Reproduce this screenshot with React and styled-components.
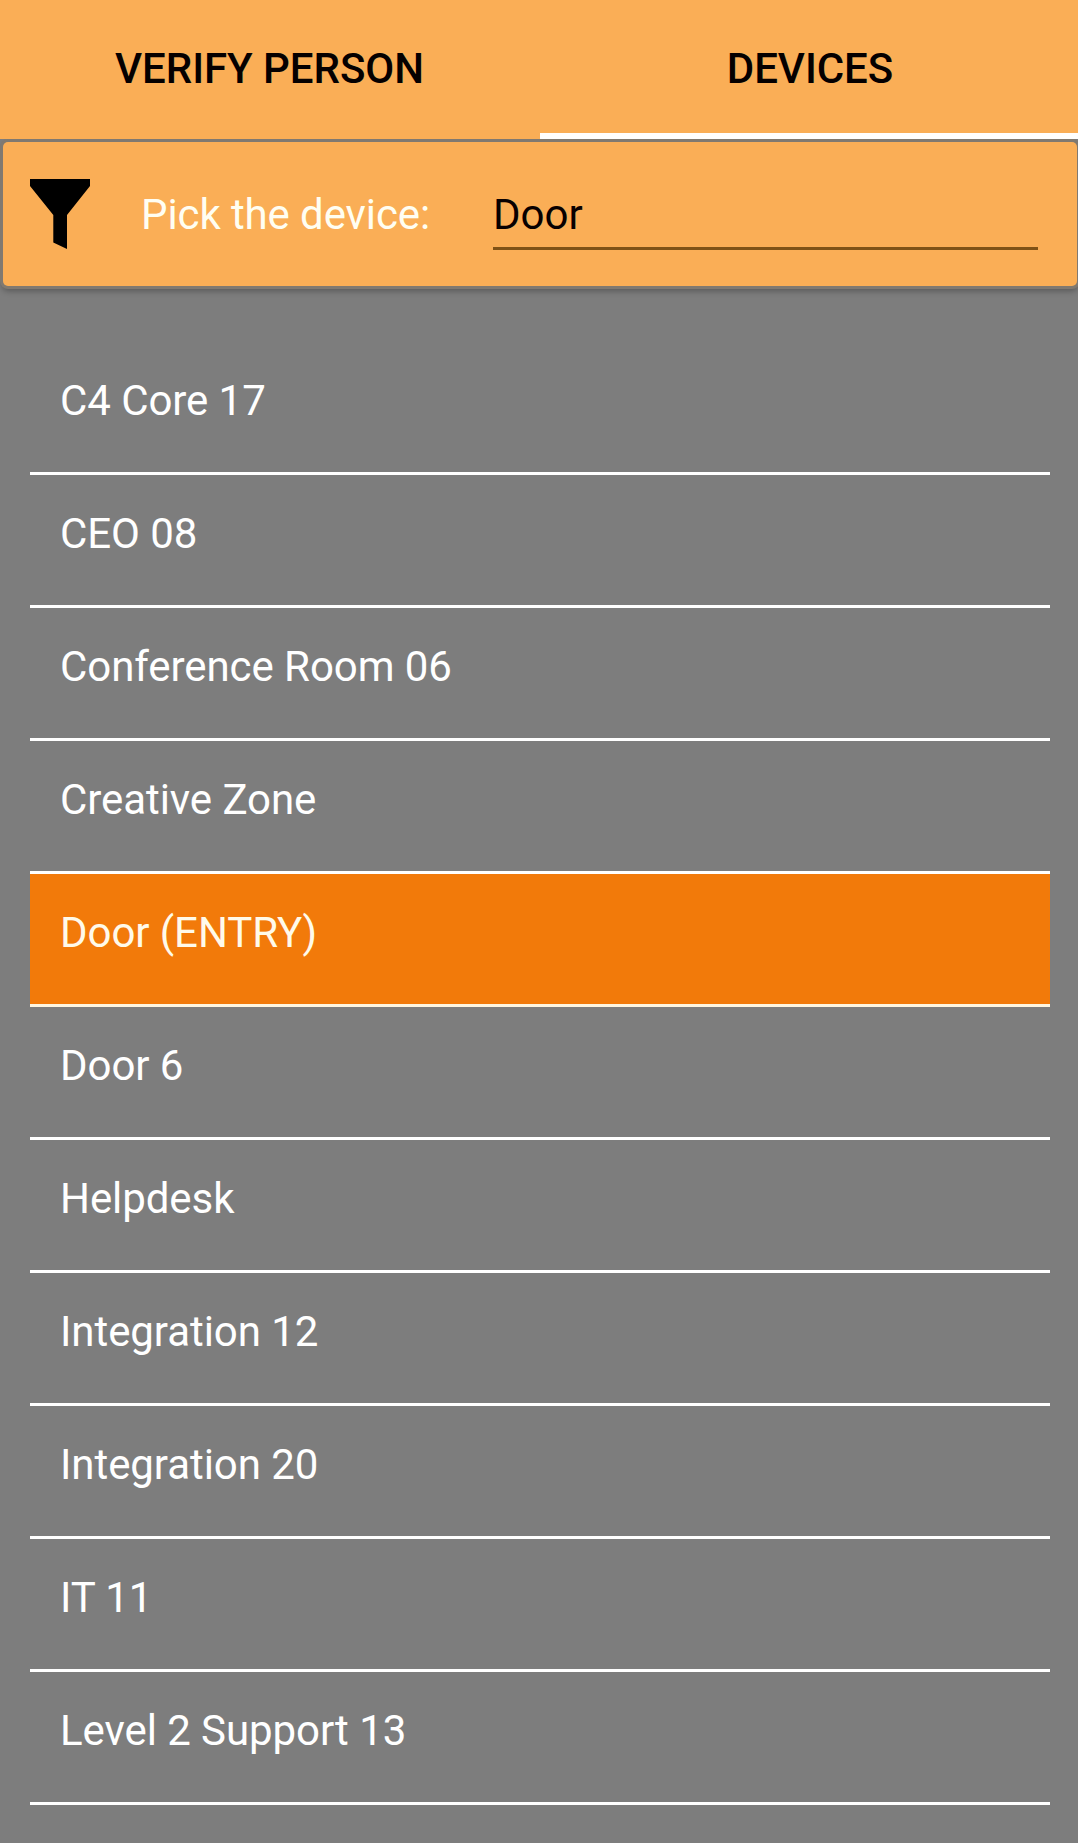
import React, { useState } from 'react';
import styled, { createGlobalStyle } from 'styled-components';

const GlobalStyle = createGlobalStyle`
  * { box-sizing: border-box; }
  body {
    margin: 0;
    background: #7d7d7d;
    font-family: Roboto, "Liberation Sans", sans-serif;
  }
`;

const Screen = styled.div`
  display: flex;
  flex-direction: column;
  width: 1078px;
  height: 1843px;
  overflow: hidden;
  background: #7d7d7d;
`;

const Tabs = styled.nav`
  display: grid;
  grid-template-columns: 540px 538px;
  height: 139px;
  flex: none;
  background: #faae56;
`;

const Tab = styled.button`
  appearance: none;
  margin: 0;
  padding: 4px ${(p) => (p.$active ? '0 0 2px' : '1px 0 0')};
  border: 0;
  border-bottom: 6px solid ${(p) => (p.$active ? '#ffffff' : 'transparent')};
  background: none;
  color: #050000;
  font: 500 42px/49px Roboto, "Liberation Sans", sans-serif;
  letter-spacing: -0.05px;
  text-transform: uppercase;
`;

const FilterCard = styled.section`
  display: flex;
  align-items: flex-start;
  flex: none;
  height: 144px;
  margin: 3px 1px 0 3px;
  padding: 0 39px 0 27px;
  border-radius: 5px;
  background: #faae56;
  box-shadow: 0 0 0 3px #807970, 0 4px 6px 1px rgba(0, 0, 0, 0.3);
  clip-path: inset(-3px -3px -20px -3px);
`;

const FunnelIcon = styled.svg`
  flex: none;
  width: 60px;
  height: 70px;
  margin: 37px 51px 0 0;
  fill: #000000;
`;

const FilterLabel = styled.label`
  flex: none;
  width: 352px;
  margin-top: 48px;
  color: #fffef2;
  font-size: 42px;
  line-height: 49px;
  letter-spacing: -0.1px;
`;

const FilterInput = styled.input`
  flex: 1;
  min-width: 0;
  height: 60px;
  margin: 48px 0 0;
  padding: 0 0 8px;
  border: 0;
  border-bottom: 3px solid #7f5216;
  border-radius: 0;
  outline: none;
  background: transparent;
  color: #080000;
  font: 400 42px/49px Roboto, "Liberation Sans", sans-serif;
`;

const DeviceList = styled.ul`
  margin: 56px 28px 0 30px;
  padding: 0;
  list-style: none;
`;

const DeviceRow = styled.li`
  height: 133px;
  padding: 34px 30px 0;
  border-bottom: 3px solid ${(p) => (p.$selected ? '#fff6e0' : '#ffffff')};
  background: ${(p) => (p.$selected ? '#f27a0a' : 'transparent')};
  color: ${(p) => (p.$selected ? '#fffaea' : '#ffffff')};
  font-size: 42px;
  line-height: 49px;
  letter-spacing: -0.07px;
`;

const devices = [
  'C4 Core 17',
  'CEO 08',
  'Conference Room 06',
  'Creative Zone',
  'Door (ENTRY)',
  'Door 6',
  'Helpdesk',
  'Integration 12',
  'Integration 20',
  'IT 11',
  'Level 2 Support 13',
];

export default function App() {
  const [query, setQuery] = useState('Door');
  const [selected, setSelected] = useState('Door (ENTRY)');

  return (
    <>
      <GlobalStyle />
      <Screen>
        <Tabs>
          <Tab>Verify person</Tab>
          <Tab $active>Devices</Tab>
        </Tabs>
        <FilterCard>
          <FunnelIcon viewBox="0 0 60 70" aria-hidden="true">
            <path d="M0 0H60V7L37 36V70L23.300 63.500V36L0 7Z" />
          </FunnelIcon>
          <FilterLabel htmlFor="device">Pick the device:</FilterLabel>
          <FilterInput
            id="device"
            value={query}
            onChange={(e) => setQuery(e.target.value)}
          />
        </FilterCard>
        <DeviceList>
          {devices.map((name) => (
            <DeviceRow
              key={name}
              $selected={name === selected}
              onClick={() => setSelected(name)}
            >
              {name}
            </DeviceRow>
          ))}
        </DeviceList>
      </Screen>
    </>
  );
}
